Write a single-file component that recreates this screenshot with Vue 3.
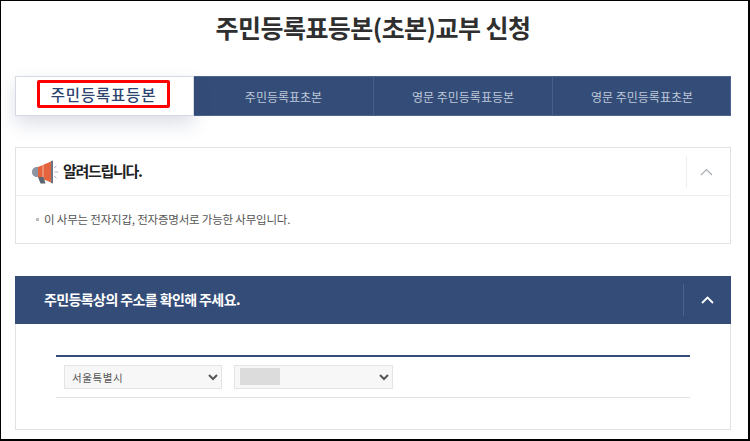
<script setup>
const tabs = ['주민등록표등본', '주민등록표초본', '영문 주민등록표등본', '영문 주민등록표초본']
</script>

<template>
  <div class="page">
    <h1 class="title">주민등록표등본(초본)교부 신청</h1>

    <ul class="tabs">
      <li v-for="(tab, i) in tabs" :key="tab" class="tab" :class="{ active: i === 0 }">
        <span class="tab-label">{{ tab }}</span>
      </li>
    </ul>

    <section class="notice">
      <div class="notice-head">
        <svg class="horn" width="27" height="24" viewBox="0 0 27 24">
          <path d="M7 7 V17 H6 C2.500 17 1 14.500 1 12 C1 9.500 2.500 7 6 7Z" fill="#8b95a3" />
          <path d="M7 7 L20 1.500 V22.500 L7 17Z" fill="#e4643f" />
          <path d="M12 5 V19" stroke="#f3b9a6" stroke-width="1" />
          <path d="M20 1 L22 0.500 V23.500 L20 23Z" fill="#6c7683" />
          <path d="M7 17 H12.500 L14.500 23.500 H9.500Z" fill="#5d6773" />
          <path d="M23 8 L25.500 6 M23.500 12 H27 M23 16 L25.500 18" stroke="#a9b0b8" stroke-width="1" fill="none" />
        </svg>
        <strong class="notice-title">알려드립니다.</strong>
        <div class="toggle">
          <svg width="13" height="8" viewBox="0 0 13 8"><path d="M1 7 L6.500 1.500 L12 7" fill="none" stroke="#a9adb3" stroke-width="1.200" /></svg>
        </div>
      </div>
      <div class="notice-body">
        <span class="bullet"></span>
        <p>이 사무는 전자지갑, 전자증명서로 가능한 사무입니다.</p>
      </div>
    </section>

    <section class="address">
      <div class="address-head">
        <strong>주민등록상의 주소를 확인해 주세요.</strong>
        <div class="toggle dark">
          <svg width="13" height="8" viewBox="0 0 13 8"><path d="M1 7 L6.500 1.500 L12 7" fill="none" stroke="#fff" stroke-width="1.800" /></svg>
        </div>
      </div>
      <div class="address-body">
        <div class="form-row">
          <select class="sel city">
            <option>서울특별시</option>
          </select>
          <div class="district">
            <select class="sel gu">
              <option></option>
            </select>
            <span class="masked"></span>
          </div>
        </div>
      </div>
    </section>
  </div>
</template>

<style scoped>
.page {
  box-sizing: border-box;
  width: 750px;
  height: 441px;
  border: 1px solid #000;
  border-width: 1px 2px 2px 1px;
  padding: 0 17px 0 14px;
  overflow: hidden;
  background: #fff;
  font-family: "Noto Sans CJK KR", sans-serif;
}
.title {
  margin: 8px 0 0;
  height: 67px;
  font-size: 25px;
  line-height: 36px;
  font-weight: 700;
  letter-spacing: -0.55px;
  color: #2f2f2f;
  text-align: center;
}
.tabs {
  display: grid;
  grid-template-columns: 179px 179px 179px 1fr;
  height: 40px;
  margin: 0;
  padding: 0;
  list-style: none;
  background: #334d78;
  box-shadow: 0 0 0 1px #4d6590 inset;
}
.tab {
  display: flex;
  align-items: center;
  justify-content: center;
  font-size: 12px;
  color: #bfc8d8;
  border-left: 1px solid #45608b;
}
.tab:first-child + .tab {
  border-left: 0;
}
.tab.active {
  position: relative;
  background: #fff;
  border: 1px solid #d5d9e4;
  color: #2d4570;
  font-size: 15.500px;
  font-weight: 500;
  box-shadow: 0 8px 18px rgba(60, 75, 120, 0.18);
}
.tab.active .tab-label {
  display: block;
  position: relative;
  top: -2px;
  left: -1px;
  box-sizing: border-box;
  width: 133px;
  height: 28px;
  line-height: 22px;
  text-align: center;
  border: 3px solid #f00;
  border-radius: 2px;
  letter-spacing: 0.8px;
}
.notice {
  margin-top: 31px;
  height: 97px;
  border: 1px solid #e2e2e2;
  box-sizing: border-box;
}
.notice-head {
  display: flex;
  align-items: center;
  height: 47px;
  padding-left: 15px;
  border-bottom: 1px solid #eee;
}
.horn {
  margin-right: 5px;
}
.notice-title {
  position: relative;
  top: -1px;
  font-size: 15px;
  font-weight: 700;
  letter-spacing: -1.300px;
  color: #222;
}
.toggle {
  display: flex;
  align-items: center;
  justify-content: center;
  box-sizing: border-box;
  width: 44px;
  height: 32px;
  margin-left: auto;
  padding-right: 4px;
  border-left: 1px solid #eee;
}
.notice-body {
  display: flex;
  align-items: center;
  height: 46px;
  padding-left: 20px;
}
.bullet {
  width: 3px;
  height: 3px;
  margin-right: 5px;
  background: #bbb;
}
.notice-body p {
  margin: 0;
  font-size: 11.500px;
  letter-spacing: -0.2px;
  color: #555;
}
.address {
  margin-top: 32px;
}
.address-head {
  display: flex;
  align-items: center;
  height: 48px;
  padding-left: 29px;
  background: #334d78;
  color: #fff;
  font-size: 14px;
  letter-spacing: -0.600px;
}
.address-head strong {
  position: relative;
  top: -1px;
}
.toggle.dark {
  width: 48px;
  padding-right: 1px;
  border-left-color: #4a638c;
}
.address-body {
  box-sizing: border-box;
  height: 106px;
  padding: 31px 40px 0;
  border: 1px solid #e2e2e2;
  border-top: 0;
}
.form-row {
  box-sizing: border-box;
  display: flex;
  align-items: center;
  gap: 12px;
  height: 43px;
  padding-left: 8px;
  border-top: 2px solid #334d78;
  border-bottom: 1px solid #e2e2e2;
}
.sel {
  box-sizing: border-box;
  height: 24px;
  padding-left: 3px;
  border: 1px solid #e4e4e4;
  background: #f7f7f7;
  font-family: inherit;
  font-size: 10.500px;
  letter-spacing: 0.6px;
  color: #555;
}
.city {
  width: 158px;
}
.gu {
  width: 159px;
}
.district {
  position: relative;
  display: flex;
}
.masked {
  position: absolute;
  left: 6px;
  top: 3px;
  width: 40px;
  height: 17px;
  background: #dcdcdc;
}
</style>
